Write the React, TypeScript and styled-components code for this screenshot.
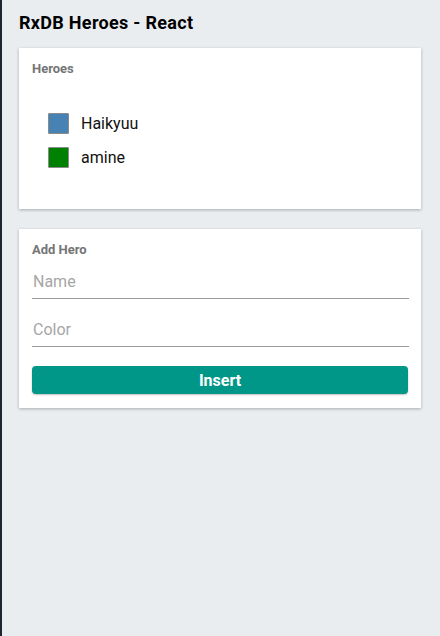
import React, { useState } from 'react';
import styled, { createGlobalStyle } from 'styled-components';

const GlobalStyle = createGlobalStyle`
  html, body {
    margin: 0;
    padding: 0;
    background: #e9edf0;
  }
  body {
    border-left: 2px solid #1e2632;
    min-height: 636px;
    box-sizing: border-box;
    font-family: Roboto, "Liberation Sans", Arial, sans-serif;
  }
`;

const Page = styled.div`
  padding: 0 19px 0 17px;
`;

const Title = styled.h1`
  margin: 0;
  padding: 12px 0 0;
  height: 36px;
  line-height: 22px;
  font-size: 18px;
  letter-spacing: 0.3px;
  font-weight: 700;
  color: #000;
`;

const Card = styled.section`
  background: #fff;
  box-shadow: 0 1px 3px rgba(0, 0, 0, 0.28);
  padding: 13px 12px 14px 13px;
  margin-bottom: 20px;
`;

const CardLabel = styled.h2`
  margin: 0;
  font-size: 13px;
  line-height: 16px;
  font-weight: 700;
  color: #757575;
`;

const HeroList = styled.ul`
  list-style: none;
  margin: 0;
  padding: 29px 0 21px 16px;
`;

const HeroRow = styled.li`
  display: flex;
  align-items: center;
  height: 34px;
  font-size: 16px;
  color: #111;
`;

const Swatch = styled.span<{ $color: string }>`
  display: inline-block;
  width: 19px;
  height: 19px;
  margin-right: 12px;
  background: ${({ $color }) => $color};
  border: 1px solid #8a8a8a;
  border-radius: 1px;
`;

const Form = styled.div`
  display: flex;
  flex-direction: column;
  padding-top: 6px;
`;

const Field = styled.input`
  height: 34px;
  border: 0;
  border-bottom: 1px solid #9b9b9b;
  outline: none;
  padding: 0 1px;
  margin-bottom: 13px;
  font-family: inherit;
  font-size: 16px;
  color: #222;
  background: transparent;
  caret-color: #000;
  &::placeholder {
    color: #a6a6a6;
  }
`;

const InsertButton = styled.button`
  margin-top: 6px;
  height: 28px;
  margin-right: 1px;
  border: 0;
  border-radius: 4px;
  background: #009688;
  color: #fff;
  font-family: inherit;
  font-size: 16px;
  font-weight: 700;
  box-shadow: 0 1px 2px rgba(0, 0, 0, 0.25);
  cursor: pointer;
`;

const heroes = [
  { name: 'Haikyuu', color: '#4682b4' },
  { name: 'amine', color: '#008000' },
];

export default function App() {
  const [name, setName] = useState('');
  const [color, setColor] = useState('');

  return (
    <>
      <GlobalStyle />
      <Page>
        <Title>RxDB Heroes - React</Title>
        <Card>
          <CardLabel>Heroes</CardLabel>
          <HeroList>
            {heroes.map(h => (
              <HeroRow key={h.name}>
                <Swatch $color={h.color} />
                {h.name}
              </HeroRow>
            ))}
          </HeroList>
        </Card>
        <Card>
          <CardLabel>Add Hero</CardLabel>
          <Form>
            <Field
              autoFocus
              placeholder="Name"
              value={name}
              onChange={e => setName(e.target.value)}
            />
            <Field
              placeholder="Color"
              value={color}
              onChange={e => setColor(e.target.value)}
            />
            <InsertButton>Insert</InsertButton>
          </Form>
        </Card>
      </Page>
    </>
  );
}
